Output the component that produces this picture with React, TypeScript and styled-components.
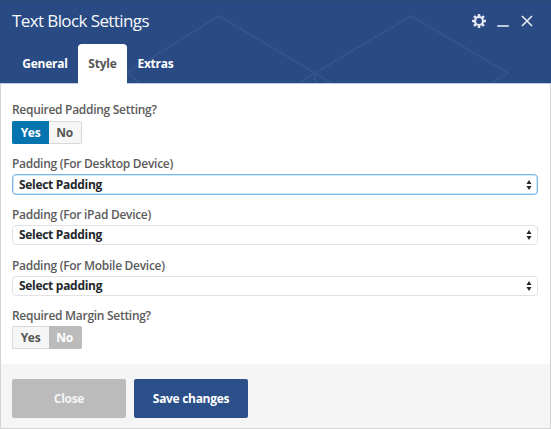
import React from "react";
import styled, { createGlobalStyle } from "styled-components";

const GlobalStyle = createGlobalStyle`
  * { box-sizing: border-box; }
  body { margin: 0; background: #fff; font-family: "Open Sans", sans-serif; }
  button { font-family: inherit; padding: 0; margin: 0; cursor: pointer; }
`;

const Panel = styled.div`
  width: 551px;
  height: 429px;
  display: flex;
  flex-direction: column;
  background: #fff;
  overflow: hidden;
  box-shadow: inset 1px 0 #d4d4d4, inset -1px 0 #d4d4d4, inset 0 -1px #d4d4d4;
`;

const Header = styled.header`
  height: 83px;
  flex: none;
  position: relative;
  display: flex;
  flex-direction: column;
  justify-content: space-between;
  background: #294a82;
  box-shadow: inset 0 1px #2f4a76, 0 1px #c3cde0;
`;

const Pattern = styled.svg`
  position: absolute;
  inset: 0;
  pointer-events: none;
`;

const TitleBar = styled.div`
  position: relative;
  height: 41px;
  padding: 0 17px 0 12px;
  display: flex;
  align-items: center;
  justify-content: space-between;
`;

const Title = styled.h1`
  margin: 0;
  font-size: 17px;
  line-height: 22px;
  font-weight: 400;
  color: #f8fafd;
  letter-spacing: -0.6px;
`;

const Controls = styled.div`
  display: flex;
  align-items: center;
  gap: 10px;
`;

const IconButton = styled.button`
  display: flex;
  border: 0;
  background: none;
  color: #e3e8f1;
`;

const Tabs = styled.nav`
  position: relative;
  display: flex;
  padding-left: 12px;
`;

const Tab = styled.button<{ $active?: boolean; $width: number }>`
  width: ${(p) => p.$width}px;
  height: 39px;
  border: 0;
  border-radius: 4px 4px 0 0;
  background: ${(p) => (p.$active ? "#fff" : "transparent")};
  box-shadow: ${(p) => (p.$active ? "0 1px #fff" : "none")};
  color: ${(p) => (p.$active ? "#555" : "#fff")};
  font-size: 12px;
  line-height: 16px;
  font-weight: 700;
  letter-spacing: -0.22px;
`;

const Body = styled.main`
  flex: 1;
  padding: 18px 13px 0 12px;
  display: flex;
  flex-direction: column;
`;

const Field = styled.div<{ $height: number }>`
  height: ${(p) => p.$height}px;
  display: flex;
  flex-direction: column;
  align-items: flex-start;
`;

const Label = styled.label<{ $height: number }>`
  height: ${(p) => p.$height}px;
  flex: none;
  font-size: 12px;
  line-height: 17px;
  font-weight: 600;
  letter-spacing: -0.29px;
  color: #5b5b5b;
  white-space: nowrap;
`;

const Switch = styled.div`
  display: flex;
  width: 70px;
  height: 23px;
`;

type Tone = "blue" | "gray" | "off";
const tones = {
  blue: { bg: "#0473ae", border: "#0473ae", color: "#fff" },
  gray: { bg: "#bbb", border: "#bbb", color: "#fff" },
  off: { bg: "#f6f6f6", border: "#d9d9d9", color: "#555" },
};

const Option = styled.button<{ $tone: Tone; $side: "left" | "right" }>`
  width: ${(p) => (p.$side === "left" ? 37 : 33)}px;
  padding-right: 1px;
  border: 1px solid ${(p) => tones[p.$tone].border};
  border-${(p) => (p.$side === "left" ? "right" : "left")}-width: 0;
  border-radius: ${(p) => (p.$side === "left" ? "2px 0 0 2px" : "0 2px 2px 0")};
  background: ${(p) => tones[p.$tone].bg};
  color: ${(p) => tones[p.$tone].color};
  font-size: 12px;
  line-height: 16px;
  font-weight: 700;
  letter-spacing: -0.3px;
`;

const Select = styled.button<{ $focused?: boolean }>`
  width: 526px;
  height: ${(p) => (p.$focused ? 21 : 20)}px;
  padding: 0 5px 0 6px;
  display: flex;
  align-items: center;
  justify-content: space-between;
  border: 1px solid ${(p) => (p.$focused ? "#79b6ea" : "#e2e2e2")};
  border-radius: 4px;
  box-shadow: ${(p) => (p.$focused ? "inset 0 0 0 0.5px #a9d1f3" : "none")};
  background: #fff;
  color: #23272b;
  font-size: 12px;
  line-height: 18px;
  font-weight: 700;
  letter-spacing: -0.3px;
`;

const Footer = styled.footer`
  height: 65px;
  flex: none;
  display: flex;
  gap: 8px;
  padding: 15px 12px 0;
  background: #f5f5f5;
  box-shadow: inset 1px 0 #d4d4d4, inset -1px 0 #d4d4d4, inset 0 -1px #d4d4d4;
`;

const Action = styled.button<{ $primary?: boolean }>`
  width: 114px;
  height: 39px;
  border: 0;
  border-radius: 2px;
  background: ${(p) => (p.$primary ? "#2b4f89" : "#bbb")};
  color: ${(p) => (p.$primary ? "#fff" : "#f5f5f5")};
  font-size: 12px;
  line-height: 16px;
  font-weight: 700;
  letter-spacing: -0.3px;
`;

const teeth = [0, 45, 90, 135, 180, 225, 270, 315];

const GearIcon = () => (
  <svg width="14" height="14" viewBox="0 0 14 14">
    <circle cx="7" cy="7" r="4" fill="none" stroke="currentColor" strokeWidth="2.2" />
    {teeth.map((a) => (
      <rect key={a} x="5.7" y="0" width="2.6" height="2.8" rx="0.5" fill="currentColor" transform={`rotate(${a} 7 7)`} />
    ))}
  </svg>
);

const MinimizeIcon = () => (
  <svg width="14" height="14" viewBox="0 0 14 14">
    <path d="M1.2 12H12.8" stroke="currentColor" strokeWidth="1.6" />
  </svg>
);

const CloseIcon = () => (
  <svg width="14" height="14" viewBox="0 0 14 14">
    <path d="M2 2L12 12M12 2L2 12" stroke="currentColor" strokeWidth="1.7" />
  </svg>
);

const Arrows = () => (
  <svg width="6" height="10" viewBox="0 0 6 10">
    <path d="M3 0L5.5 4H0.5ZM3 10L5.5 6H0.5Z" fill="#23272b" />
  </svg>
);

const YesNo = ({ yes, no }: { yes: Tone; no: Tone }) => (
  <Switch>
    <Option $side="left" $tone={yes}>Yes</Option>
    <Option $side="right" $tone={no}>No</Option>
  </Switch>
);

const selects = [
  { label: "Padding (For Desktop Device)", value: "Select Padding", height: 51, focused: true },
  { label: "Padding (For iPad Device)", value: "Select Padding", height: 51 },
  { label: "Padding (For Mobile Device)", value: "Select padding", height: 50 },
];

export default function App() {
  return (
    <>
      <GlobalStyle />
      <Panel>
        <Header>
          <Pattern width="551" height="83" viewBox="0 0 551 83" fill="none" stroke="#31528b" strokeWidth="2.5">
            <path d="M149 90L127 73L219 16L315 73L342 90M288 90L315 73L411 16L508 73L483 88M315 73V83" />
          </Pattern>
          <TitleBar>
            <Title>Text Block Settings</Title>
            <Controls>
              <IconButton aria-label="Settings"><GearIcon /></IconButton>
              <IconButton aria-label="Minimize"><MinimizeIcon /></IconButton>
              <IconButton aria-label="Close"><CloseIcon /></IconButton>
            </Controls>
          </TitleBar>
          <Tabs>
            <Tab $width={66}>General</Tab>
            <Tab $width={49} $active>Style</Tab>
            <Tab $width={57}>Extras</Tab>
          </Tabs>
        </Header>
        <Body>
          <Field $height={54}>
            <Label $height={20}>Required Padding Setting?</Label>
            <YesNo yes="blue" no="off" />
          </Field>
          {selects.map((s) => (
            <Field key={s.label} $height={s.height}>
              <Label $height={19}>{s.label}</Label>
              <Select $focused={s.focused}>
                {s.value}
                <Arrows />
              </Select>
            </Field>
          ))}
          <Field $height={42}>
            <Label $height={19}>Required Margin Setting?</Label>
            <YesNo yes="off" no="gray" />
          </Field>
        </Body>
        <Footer>
          <Action>Close</Action>
          <Action $primary>Save changes</Action>
        </Footer>
      </Panel>
    </>
  );
}
